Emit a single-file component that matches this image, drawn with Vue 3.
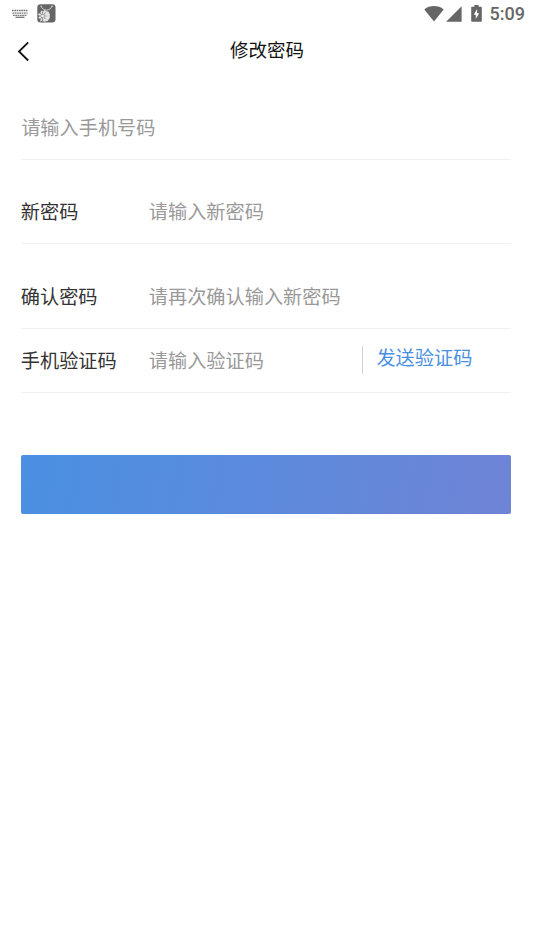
<script setup>
const rows = [
  { id: 'phone', label: '', hint: '请输入手机号码' },
  { id: 'password', label: '新密码', hint: '请输入新密码' },
  { id: 'confirm', label: '确认密码', hint: '请再次确认输入新密码' },
  { id: 'code', label: '手机验证码', hint: '请输入验证码', action: '发送验证码' },
]
</script>

<template>
  <div class="screen">
    <header class="status">
      <svg class="keyboard" width="18" height="10" viewBox="0 0 18 10">
        <path d="M1 1.5h16M1.5 4.2h15M2 6.4h14" stroke="#777" stroke-width="1.3" stroke-dasharray="1.7 .6" fill="none" />
        <path d="M4.5 8.3h9" stroke="#777" stroke-width="1.3" />
      </svg>
      <svg class="app" width="19" height="19" viewBox="0 0 19 19">
        <rect x=".3" y=".3" width="18.2" height="18.2" rx="3.2" fill="#666" />
        <path d="M4.2 2C5.5 7.5 13.5 7.5 15 2" fill="none" stroke="#ddd" stroke-width=".9" />
        <circle cx="4.2" cy="2.2" r=".8" fill="#ccc" />
        <circle cx="15" cy="2.2" r=".8" fill="#ccc" />
        <path d="M4.3 6.5l1.9.8L7.6 6l1.5 1.3 2.2.2 1.5 2.6v4l-2.1 3-3.4.7-2.3-1-1.8.9.3-2.5L1.4 14l1-1.9L.8 10l2.5-.9z" fill="#e2e2e2" />
        <path d="M5.6 7.3v9.7M1.8 12h7.5M3 9l5.5 6.2M8.4 8.6L3 15.5" stroke="#777" stroke-width=".8" />
        <circle cx="5.6" cy="12" r="1.3" fill="#eee" />
      </svg>
      <span class="spacer"></span>
      <svg class="wifi" width="20" height="16" viewBox="0 0 20 16">
        <path d="M.3 3.4C6-1 14-1 19.7 3.4L10 15.5z" fill="#666" />
      </svg>
      <svg class="signal" width="16" height="16" viewBox="0 0 16 16">
        <path d="M15.6.2v15.5H.1z" fill="#666" />
      </svg>
      <svg class="battery" width="11" height="17" viewBox="0 0 11 17">
        <path d="M3.4 0h4.2v1.7H10q.8 0 .8.8v13.4q0 .8-.8.8H1q-.8 0-.8-.8V2.5q0-.8.8-.8h2.4z" fill="#666" />
        <path d="M6.1 4L2.8 9.8h2V14l3.4-5.8H6.1z" fill="#fff" />
      </svg>
      <span class="time">5:09</span>
    </header>

    <nav class="nav">
      <svg class="back" width="13" height="21" viewBox="0 0 13 21">
        <path d="M11.2 1.4L2 10.5l9.2 9" fill="none" stroke="#111" stroke-width="1.8" />
      </svg>
      <h1 class="title">修改密码</h1>
    </nav>

    <main class="form">
      <div v-for="row in rows" :key="row.id" class="row" :class="row.id">
        <span v-if="row.label" class="label">{{ row.label }}</span>
        <span class="hint">{{ row.hint }}</span>
        <span v-if="row.action" class="action">{{ row.action }}</span>
      </div>
      <div class="submit" role="button"></div>
    </main>
  </div>
</template>

<style>
body {
  background: #fff;
}
</style>

<style scoped>
.screen {
  height: 950px;
  box-sizing: border-box;
  overflow: hidden;
  background: #fff;
  font-family: 'Noto Sans CJK SC', sans-serif;
}
.status {
  display: flex;
  align-items: center;
  height: 27px;
  padding: 0 10px 0 11px;
}
.app {
  margin-left: 8px;
}
.spacer {
  flex: 1;
}
.signal {
  margin-left: 2px;
}
.battery {
  margin-left: 8.6px;
}
.time {
  margin-left: 8px;
  width: 34.4px;
  color: #666;
  font: 500 18px/27px Roboto, sans-serif;
  white-space: nowrap;
}
.nav {
  display: grid;
  grid-template-columns: 60px 1fr 60px;
  align-items: center;
  height: 47px;
}
.back {
  margin: 2px 0 0 17px;
}
.title {
  margin: 0;
  padding-bottom: 3px;
  color: #111;
  font-size: 18.5px;
  font-weight: 400;
  line-height: 28px;
  text-align: center;
}
.form {
  padding: 22px 23px 0 20.8px;
}
.row {
  display: flex;
  align-items: center;
  box-sizing: border-box;
  height: 64px;
  padding-bottom: 2px;
  border-bottom: 1px solid #f0f0f0;
  font-size: 19.2px;
  line-height: 28px;
  white-space: nowrap;
}
.password {
  margin-top: 20px;
}
.confirm {
  margin-top: 21px;
}
.label {
  width: 128px;
  color: #333;
}
.hint {
  color: #999;
}
.phone .hint {
  padding-left: 0.4px;
}
.action {
  box-sizing: border-box;
  width: 149px;
  height: 28px;
  margin-left: auto;
  padding-left: 13.4px;
  border-left: 1px solid #d4d4d4;
  color: #4a90e2;
  line-height: 22px;
}
.submit {
  height: 58.6px;
  margin-top: 62px;
  border-radius: 2px;
  background: linear-gradient(100deg, #4a90e2, #6f84d6);
}
</style>
